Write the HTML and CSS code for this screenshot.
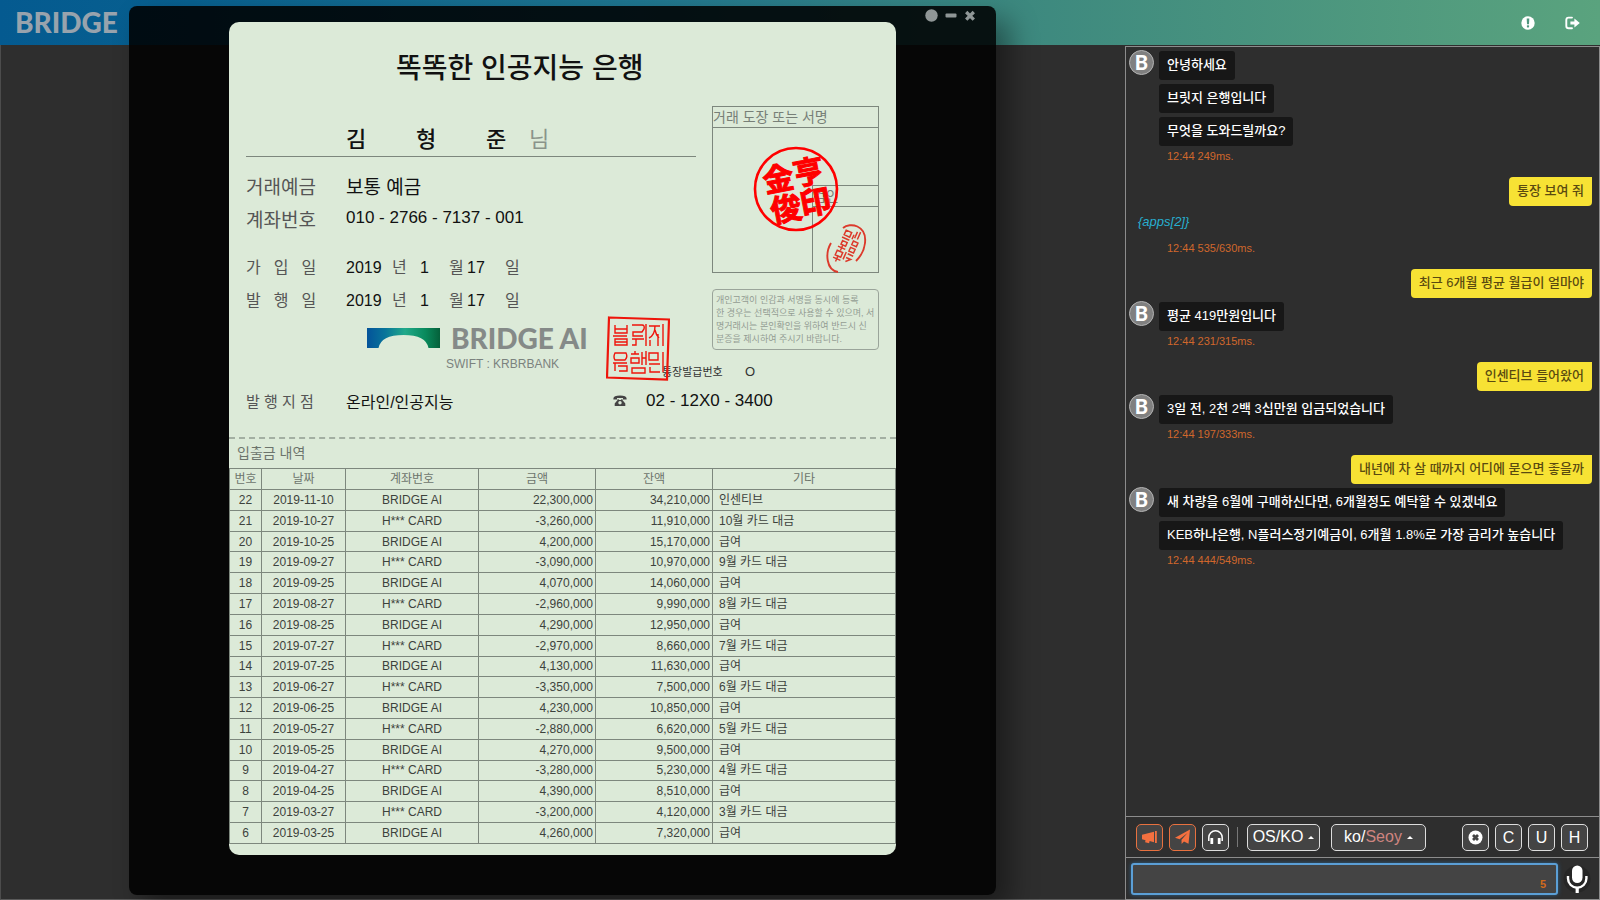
FILE: index.html
```html
<!DOCTYPE html>
<html lang="ko">
<head>
<meta charset="utf-8">
<title>BRIDGE</title>
<link rel="stylesheet" href="styles.css">
</head>
<body>
<div class="app">
  <header class="topbar">
    <h1 class="brand">BRIDGE</h1>
    <nav class="topbar-actions">
      <button class="bare" aria-label="알림">
        <svg width="14" height="14" viewBox="0 0 14 14"><circle cx="7" cy="7" r="6.7" fill="#fff"/><path d="M5.7 2.6h2.6L8 8.2H6z" fill="#4f967f"/><rect x="5.9" y="9.2" width="2.2" height="2.2" rx=".6" fill="#4f967f"/></svg>
      </button>
      <button class="bare" aria-label="로그아웃">
        <svg width="15" height="14" viewBox="0 0 15 14"><path d="M7 1.6H3.6Q1.3 1.6 1.3 4v6q0 2.3 2.3 2.3H7" fill="none" stroke="#fff" stroke-width="1.9" stroke-linecap="round"/><path d="M5.4 5.4h4V2.6L14.8 7l-5.4 4.4V8.6h-4z" fill="#fff"/></svg>
      </button>
    </nav>
  </header>

  <main class="workspace">
    <div class="desktop"></div>

    <section class="chat" aria-label="대화">
      <div class="messages">
        <div class="turn">
          <span class="avatar">B</span>
          <div class="replies">
            <p class="bubble">안녕하세요</p>
            <p class="bubble">브릿지 은행입니다</p>
            <p class="bubble">무엇을 도와드릴까요?</p>
          </div>
        </div>
        <p class="stamp-time">12:44 249ms.</p>
        <p class="mine">통장 보여 줘</p>
        <p class="intent">{apps[2]}</p>
        <p class="stamp-time">12:44 535/630ms.</p>
        <p class="mine">최근 6개월 평균 월급이 얼마야</p>
        <div class="turn">
          <span class="avatar">B</span>
          <div class="replies"><p class="bubble">평균 419만원입니다</p></div>
        </div>
        <p class="stamp-time">12:44 231/315ms.</p>
        <p class="mine">인센티브 들어왔어</p>
        <div class="turn">
          <span class="avatar">B</span>
          <div class="replies"><p class="bubble">3일 전, 2천 2백 3십만원 입금되었습니다</p></div>
        </div>
        <p class="stamp-time">12:44 197/333ms.</p>
        <p class="mine">내년에 차 살 때까지 어디에 묻으면 좋을까</p>
        <div class="turn">
          <span class="avatar">B</span>
          <div class="replies">
            <p class="bubble">새 차량을 6월에 구매하신다면, 6개월정도 예탁할 수 있겠네요</p>
            <p class="bubble">KEB하나은행, N플러스정기예금이, 6개월 1.8%로 가장 금리가 높습니다</p>
          </div>
        </div>
        <p class="stamp-time">12:44 444/549ms.</p>
      </div>

      <div class="toolbar">
        <button class="tool hot" aria-label="음성 출력"><svg width="18" height="16" viewBox="0 0 18 16"><path d="M1 5.800 13 2.800v10.400L8.600 12l-.5 2.200-4-.9.4-2L1 10.200z" fill="#f4703f"/><rect x="14" y="2" width="1.800" height="12" fill="#f4703f"/></svg></button>
        <button class="tool hot" aria-label="전송"><svg width="17" height="16" viewBox="0 0 17 16"><path d="M16 .5 14.500 14.800 10 12.600 7.600 15 7.500 10.800 13.500 4 5.600 10.200 1 8.800z" fill="#f4703f"/></svg></button>
        <button class="tool" aria-label="듣기"><svg width="17" height="16" viewBox="0 0 17 16"><path d="M1.800 12V8.500a6.700 6.700 0 0 1 13.400 0V12" fill="none" stroke="#fff" stroke-width="1.500"/><rect x="3.400" y="9" width="2.800" height="6" rx=".5" fill="#fff"/><rect x="10.800" y="9" width="2.800" height="6" rx=".5" fill="#fff"/></svg></button>
        <span class="divider"></span>
        <button class="tool picker os">OS/KO<i class="caret"></i></button>
        <button class="tool picker voice"><span>ko/<span class="voice-name">Seoy</span></span><i class="caret"></i></button>
        <span class="spacer"></span>
        <button class="tool" aria-label="지우기"><svg width="15" height="15" viewBox="0 0 15 15"><circle cx="7.500" cy="7.500" r="7" fill="#fff"/><path d="M5 5l5 5M10 5l-5 5" stroke="#444" stroke-width="2.800"/></svg></button>
        <button class="tool letter">C</button>
        <button class="tool letter">U</button>
        <button class="tool letter">H</button>
      </div>

      <form class="composer">
        <label class="field">
          <input type="text" aria-label="메시지 입력">
          <span class="count">5</span>
        </label>
        <button class="bare mic" type="button" aria-label="음성 입력">
          <svg width="28" height="30" viewBox="0 0 28 30"><circle cx="14" cy="15" r="13.500" fill="#262626"/><rect x="9" y="1.500" width="10.500" height="17.500" rx="5.250" fill="#fff"/><path d="M5 12v2.500a9.200 9.200 0 0 0 18.400 0V12" fill="none" stroke="#fff" stroke-width="2.400"/><path d="M14.200 23v6" stroke="#fff" stroke-width="3.200"/></svg>
        </button>
      </form>
    </section>
  </main>

  <section class="window" aria-label="통장">
    <div class="window-controls">
      <button class="bare" aria-label="고정"><svg width="13" height="13" viewBox="0 0 13 13"><circle cx="6.500" cy="6.500" r="6.200" fill="#8f9696"/></svg></button>
      <button class="bare" aria-label="최소화"><svg width="12" height="13" viewBox="0 0 12 13"><rect x=".5" y="4.500" width="11" height="4" rx="1" fill="#8f9696"/></svg></button>
      <button class="bare" aria-label="닫기"><svg width="12" height="13" viewBox="0 0 12 13"><path d="M2.200 3l7.600 7.600M9.800 3l-7.600 7.600" stroke="#8f9696" stroke-width="3.300"/></svg></button>
    </div>

    <article class="passbook">
      <h2 class="title">똑똑한 인공지능 은행</h2>
      <div class="cover">
        <div class="owner">
          <div class="name"><span>김</span><span>형</span><span>준</span><span class="soft">님</span></div>
          <div class="row big"><span class="key">거래예금</span><span class="val">보통 예금</span></div>
          <div class="row big"><span class="key">계좌번호</span><span class="val num">010 - 2766 - 7137 - 001</span></div>
          <div class="row first"><span class="key spread"><b>가</b><b>입</b><b>일</b></span><span class="date"><span>2019</span><b>년</b><span>1</span><b>월</b><span>17</span><b>일</b></span></div>
          <div class="row"><span class="key spread"><b>발</b><b>행</b><b>일</b></span><span class="date"><span>2019</span><b>년</b><span>1</span><b>월</b><span>17</span><b>일</b></span></div>
          <div class="bank">
            <svg width="74" height="20" viewBox="0 0 74 20"><defs><linearGradient id="arch" x1="0" x2="1"><stop offset="0" stop-color="#04539a"/><stop offset=".25" stop-color="#08759a"/><stop offset=".52" stop-color="#21a98a"/><stop offset=".8" stop-color="#098a5c"/><stop offset="1" stop-color="#05603a"/></linearGradient></defs><path d="M0 0h73v20H61.500Q59 7 36.500 7T11.500 20H0z" fill="url(#arch)"/></svg>
            <span>BRIDGE AI</span>
          </div>
        </div>
        <div class="side">
          <div class="sign">
            <div class="sign-head">거래 도장 또는 서명</div>
            <div class="sign-body"><div class="check"><div class="sign-head">검인</div></div></div>
            <svg class="round-seal" width="86" height="86" viewBox="0 0 86 86">
              <circle cx="43" cy="43" r="41" fill="none" stroke="#f00" stroke-width="2.600"/>
              <g class="seal-text" transform="rotate(-11 43 43)"><text x="12" y="41">金</text><text x="43" y="40">亨</text><text x="14" y="72">俊</text><text x="44" y="71">印</text></g>
            </svg>
            <svg class="oval-seal" width="42" height="50" viewBox="0 0 42 50" fill="none" stroke="#dc3a2c">
              <path d="M17 5C24-1 41 2 39 20q-1 10-9 18" stroke-width="1.900"/>
              <path d="M5 20C-1 30 0 47 12 49" stroke-width="1.900"/>
              <g stroke-width="1.500" transform="rotate(24 21 25)"><path d="M13 9h6v5h-6zM12 17h8M14 20h5v4h-5zM12 27h8M16 24v6M13 31h6v5h-6zM12 39h8M16 36v6"/><path d="M24 6v7M27 5v8M24 16h5v4h-5zM24 23h5v4h-5zM24 30h6M24 34h5l-4 4M22 10v5M22 29v8"/></g>
            </svg>
          </div>
          <p class="notice">개인고객이 인감과 서명을 동시에 등록<br>한 경우는 선택적으로 사용할 수 있으며, 서<br>명거래시는 본인확인을 위하여 반드시 신<br>분증을 제시하여 주시기 바랍니다.</p>
        </div>
      </div>
      <div class="codes">
        <span class="swift">SWIFT : KRBRBANK</span>
        <span class="issue">통장발급번호</span><span class="issue-no">O</span>
      </div>
      <div class="branch">
        <span class="key">발 행 지 점</span><span class="place">온라인/인공지능</span>
        <svg width="14" height="11" viewBox="0 0 14 11"><path d="M.4 3.600Q.4.400 7 .400t6.600 3.200v1H10V3H4v1.600H.4z" fill="#444"/><path d="M4.600 4h1v1h2.800V4h1v1l2.900 3.400V11H1.700V8.400L4.600 5z" fill="#444"/><circle cx="7" cy="7.800" r="1.700" fill="#dcead8"/></svg>
        <span class="phone">02 - 12X0 - 3400</span>
      </div>
      <svg class="square-seal" width="64" height="66" viewBox="0 0 64 66" fill="none" stroke="#ee150b">
        <path d="M3 1.500 63 3.500 61 63.500 1 61.500z" stroke-width="2.200"/>
        <g stroke-width="1.400">
          <path d="M9 9v8h12V9M9 13h12M7 20h14M9 23v6h12v-6zM9 26h12"/>
          <path d="M26 9h10q3 0 2 4l-2 3H27v4h10M26 23h12M30 23v6h-4M40 8v22"/>
          <path d="M43 10h11M49 10q0 9-6 12M49 14q1 5 4 8M52 18v12M57 8v22M44 24v6"/>
          <path d="M9 37h11q2 4-1 7H9q-2-3 0-7zM7 47h14M9 47v8M12 50h9v5h-8"/>
          <path d="M25 38h8M29 35v3M25 42h8v5h-8zM36 36v13M40 35v14M36 42h4M26 52h13v5H26z"/>
          <path d="M43 37h9v7h-9zM57 36v20M43 48h11M44 51v5h10"/>
        </g>
      </svg>

      <h3 class="ledger-title">입출금 내역</h3>
      <table class="ledger">
        <colgroup><col class="c-no"><col class="c-date"><col class="c-acct"><col class="c-amt"><col class="c-bal"><col></colgroup>
        <thead><tr><th>번호</th><th>날짜</th><th>계좌번호</th><th>금액</th><th>잔액</th><th>기타</th></tr></thead>
        <tbody>
          <tr><td>22</td><td>2019-11-10</td><td>BRIDGE AI</td><td>22,300,000</td><td>34,210,000</td><td>인센티브</td></tr>
          <tr><td>21</td><td>2019-10-27</td><td>H*** CARD</td><td>-3,260,000</td><td>11,910,000</td><td>10월 카드 대금</td></tr>
          <tr><td>20</td><td>2019-10-25</td><td>BRIDGE AI</td><td>4,200,000</td><td>15,170,000</td><td>급여</td></tr>
          <tr><td>19</td><td>2019-09-27</td><td>H*** CARD</td><td>-3,090,000</td><td>10,970,000</td><td>9월 카드 대금</td></tr>
          <tr><td>18</td><td>2019-09-25</td><td>BRIDGE AI</td><td>4,070,000</td><td>14,060,000</td><td>급여</td></tr>
          <tr><td>17</td><td>2019-08-27</td><td>H*** CARD</td><td>-2,960,000</td><td>9,990,000</td><td>8월 카드 대금</td></tr>
          <tr><td>16</td><td>2019-08-25</td><td>BRIDGE AI</td><td>4,290,000</td><td>12,950,000</td><td>급여</td></tr>
          <tr><td>15</td><td>2019-07-27</td><td>H*** CARD</td><td>-2,970,000</td><td>8,660,000</td><td>7월 카드 대금</td></tr>
          <tr><td>14</td><td>2019-07-25</td><td>BRIDGE AI</td><td>4,130,000</td><td>11,630,000</td><td>급여</td></tr>
          <tr><td>13</td><td>2019-06-27</td><td>H*** CARD</td><td>-3,350,000</td><td>7,500,000</td><td>6월 카드 대금</td></tr>
          <tr><td>12</td><td>2019-06-25</td><td>BRIDGE AI</td><td>4,230,000</td><td>10,850,000</td><td>급여</td></tr>
          <tr><td>11</td><td>2019-05-27</td><td>H*** CARD</td><td>-2,880,000</td><td>6,620,000</td><td>5월 카드 대금</td></tr>
          <tr><td>10</td><td>2019-05-25</td><td>BRIDGE AI</td><td>4,270,000</td><td>9,500,000</td><td>급여</td></tr>
          <tr><td>9</td><td>2019-04-27</td><td>H*** CARD</td><td>-3,280,000</td><td>5,230,000</td><td>4월 카드 대금</td></tr>
          <tr><td>8</td><td>2019-04-25</td><td>BRIDGE AI</td><td>4,390,000</td><td>8,510,000</td><td>급여</td></tr>
          <tr><td>7</td><td>2019-03-27</td><td>H*** CARD</td><td>-3,200,000</td><td>4,120,000</td><td>3월 카드 대금</td></tr>
          <tr><td>6</td><td>2019-03-25</td><td>BRIDGE AI</td><td>4,260,000</td><td>7,320,000</td><td>급여</td></tr>
        </tbody>
      </table>
    </article>
  </section>
</div>
</body>
</html>
```

FILE: styles.css
```css
* { box-sizing: border-box; }

body, h1, h2, h3, p { margin: 0; }

body {
  background: #2e2e2e;
  color: #fff;
  font-family: "Liberation Sans", "Noto Sans CJK KR", sans-serif;
}

button, input { font: inherit; color: inherit; }

.app {
  position: relative;
  display: flex;
  flex-direction: column;
  height: 100vh;
  overflow: hidden;
}

.bare {
  display: flex;
  padding: 0;
  border: 0;
  background: none;
}

/* Top bar */
.topbar {
  display: flex;
  flex: none;
  align-items: center;
  justify-content: space-between;
  height: 45px;
  padding: 0 20px 0 15px;
  background: linear-gradient(90deg, #045a90 0%, #08608f 12%, #1f7690 40%, #3c887f 63%, #5aa37e 100%);
}

.brand {
  color: #98a3ad;
  font: 900 28px/45px Lato, sans-serif;
}

.topbar-actions {
  display: flex;
  gap: 30px;
  align-items: center;
}

.workspace {
  display: flex;
  flex: 1;
  min-height: 0;
}

.desktop {
  flex: 1;
  border-left: 1px solid #4c4c4c;
  border-bottom: 1px solid #5a5a5a;
}

/* Chat */
.chat {
  display: flex;
  flex: none;
  flex-direction: column;
  width: 475px;
  margin-top: 1px;
  border: 1px solid #8c8c8c;
}

.messages {
  display: flex;
  flex: 1;
  flex-direction: column;
  align-items: flex-start;
  min-height: 0;
  padding: 3px 7px 0 3px;
  overflow: hidden;
  font-size: 13px;
}

.turn {
  display: flex;
  gap: 5px;
}

.avatar {
  flex: none;
  width: 25px;
  height: 25px;
  border: 1px solid #b4b4b4;
  border-radius: 50%;
  background: #808080;
  font: 900 20px/23px Lato, sans-serif;
  text-align: center;
}

.replies {
  display: flex;
  flex-direction: column;
  gap: 4px;
  align-items: flex-start;
  padding-top: 1px;
}

.bubble {
  padding: 0 8px 2px;
  border-radius: 3px;
  background: #171717;
  font-weight: 500;
  line-height: 27px;
}

.stamp-time {
  height: 31px;
  padding-left: 38px;
  color: #d0672c;
  font-size: 11px;
  line-height: 20px;
}

.mine {
  align-self: flex-end;
  margin-bottom: 3px;
  padding: 0 8px 2px;
  border-radius: 4px 0 4px 4px;
  background: #f7e234;
  color: #5a4a10;
  font-weight: 500;
  line-height: 27px;
}

.intent {
  height: 29px;
  padding-left: 9px;
  color: #27aed0;
  font-style: italic;
  line-height: 26px;
}

.toolbar {
  display: flex;
  flex: none;
  gap: 6px;
  align-items: center;
  height: 42px;
  padding: 0 11px 0 10px;
  border-top: 1px solid #8c8c8c;
  border-bottom: 1px solid #8c8c8c;
}

.tool {
  display: flex;
  align-items: center;
  justify-content: center;
  width: 27px;
  height: 27px;
  padding: 0;
  border: 1px solid #ddd;
  border-radius: 5px;
  background: #444;
}

.hot { border-color: #e8713f; }

.letter {
  padding-top: 1px;
  font-size: 16px;
}

.divider {
  width: 1px;
  height: 20px;
  margin: 0 3px 0 2px;
  background: #777;
}

.picker {
  gap: 5px;
  font-size: 16px;
}

.os { width: 73px; }

.voice {
  width: 95px;
  margin-left: 5px;
}

.voice-name { color: #cf8580; }

.caret {
  border: 3px solid transparent;
  border-top: 0;
  border-bottom-color: #fff;
}

.spacer { flex: 1; }

.composer {
  display: flex;
  flex: none;
  gap: 5px;
  align-items: center;
  height: 41px;
  padding: 0 8px 0 5px;
}

.field {
  position: relative;
  flex: 1;
  height: 32px;
}

.field input {
  width: 100%;
  height: 100%;
  padding: 0 24px 0 8px;
  border: 2px solid #5b9fd6;
  border-radius: 3px;
  outline: 0;
  background: #444;
  box-shadow: 0 0 4px #2f5f86;
}

.count {
  position: absolute;
  right: 12px;
  bottom: 5px;
  color: #d06a1c;
  font-size: 11px;
  font-weight: 700;
}

/* Floating window */
.window {
  position: absolute;
  top: 6px;
  bottom: 5px;
  left: 129px;
  width: 867px;
  padding: 16px 100px 0;
  border-radius: 8px;
  background: rgba(0, 0, 0, .87);
  box-shadow: 14px 14px 28px rgba(0, 0, 0, .4);
}

.window-controls {
  position: absolute;
  top: 3px;
  right: 20px;
  display: flex;
  gap: 7px;
}

.passbook {
  position: relative;
  height: 833px;
  overflow: hidden;
  border-radius: 10px;
  background: #dcead8;
  color: #111;
}

.title {
  height: 84px;
  padding-left: 167px;
  font-size: 28px;
  font-weight: 500;
  line-height: 94px;
}

.cover {
  display: grid;
  grid-template-columns: 1fr 167px;
  gap: 16px;
  height: 248px;
  padding: 0 17px;
}

.name {
  display: flex;
  height: 51px;
  padding: 13px 0 0 100px;
  border-bottom: 1px solid #7d877d;
  font-size: 22px;
  font-weight: 500;
  line-height: 42px;
}

.name span { width: 70px; }
.name span:nth-child(3) { width: 43px; }
.name .soft { width: auto; color: #8a938a; font-weight: 400; }

.row {
  display: flex;
  height: 33px;
  font-size: 16px;
  line-height: 33px;
}

.name + .row { margin-top: 14px; }
.first { margin-top: 14px; }

.key {
  width: 100px;
  color: #555;
}

.big { font-size: 19px; }
.num { font-size: 17px; line-height: 28px; }

.spread {
  display: flex;
  gap: 13px;
}

.row b {
  color: #555;
  font-weight: 400;
}

.date {
  display: grid;
  grid-template-columns: 46px 28px 29px 18px 38px 16px;
}

.bank {
  display: flex;
  gap: 10px;
  align-items: center;
  padding: 2px 0 0 121px;
  color: #858a88;
  font: 900 28px/38px Lato, sans-serif;
  white-space: nowrap;
}

.sign {
  position: relative;
  height: 167px;
  border: 1px solid #7d877d;
  color: #777f77;
  font-size: 14px;
}

.sign-head {
  height: 21px;
  border-bottom: 1px solid #7d877d;
  line-height: 20px;
}

.sign-body {
  display: flex;
  align-items: flex-end;
  justify-content: flex-end;
  height: 144px;
}

.check {
  width: 66px;
  height: 87px;
  padding-left: 0;
  border: 1px solid #7d877d;
  border-right: 0;
  border-bottom: 0;
}

.round-seal {
  position: absolute;
  top: 39px;
  left: 40px;
  overflow: visible;
}

.seal-text {
  fill: #f00;
  stroke: #f00;
  stroke-width: 1;
  font-family: "Noto Sans CJK SC", sans-serif;
  font-size: 31px;
  font-weight: 700;
}

.oval-seal {
  position: absolute;
  top: 116px;
  left: 113px;
}

.notice {
  height: 61px;
  margin-top: 16px;
  padding: 4px 0 0 3px;
  border: 1px solid #9aa49a;
  border-radius: 4px;
  color: #939c93;
  font-size: 9px;
  line-height: 13px;
  white-space: nowrap;
}

.codes {
  display: flex;
  height: 32px;
  padding-left: 217px;
  color: #333;
  line-height: 36px;
}

.swift {
  width: 216px;
  color: #7b827e;
  font-size: 12px;
  line-height: 20px;
}

.issue { width: 83px; font-size: 11px; }
.issue-no { font-size: 13px; }

.branch {
  display: flex;
  align-items: center;
  height: 53px;
  padding: 0 17px 22px;
  border-bottom: 2px dashed #a3afa2;
}

.branch .key { font-size: 15px; }

.place {
  width: 267px;
  font-size: 16px;
}

.phone {
  margin-left: 19px;
  font-size: 17px;
}

.square-seal {
  position: absolute;
  top: 294px;
  left: 377px;
}

.ledger-title {
  height: 29px;
  padding-left: 8px;
  color: #6c746c;
  font-size: 14px;
  font-weight: 400;
  line-height: 28px;
}

.ledger {
  width: 100%;
  height: 376px;
  border-collapse: collapse;
  table-layout: fixed;
  color: #3c423c;
  font-size: 12px;
  line-height: 16px;
}

.ledger th,
.ledger td {
  padding: 0 2px;
  border: 1px solid #7d877d;
  text-align: center;
}

.ledger th {
  height: 21px;
  color: #6c746c;
  font-size: 12px;
  font-weight: 400;
}

.ledger td:nth-child(4),
.ledger td:nth-child(5) { text-align: right; }

.ledger td:nth-child(6) {
  padding-left: 6px;
  text-align: left;
}

.c-no { width: 32px; }
.c-date { width: 84px; }
.c-acct { width: 133px; }
.c-amt { width: 117px; }
.c-bal { width: 117px; }
```
